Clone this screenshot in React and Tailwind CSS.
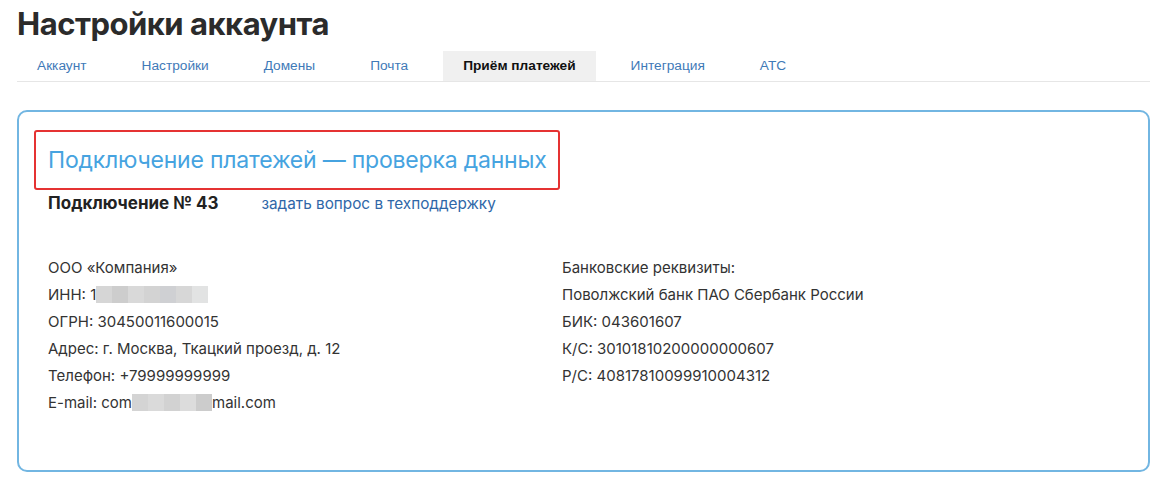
import React from 'react';

const tabs = ['Аккаунт', 'Настройки', 'Домены', 'Почта', 'Приём платежей', 'Интеграция', 'АТС'];
const active = 'Приём платежей';

// blurred fragment: a row of grey squares
const Blur = ({ shades }) => (
  <span className="inline-flex align-middle h-[17px] -mt-[2px]">
    {shades.map((c, i) => (
      <span key={i} className="w-4 h-full" style={{ backgroundColor: c }} />
    ))}
  </span>
);

const App = () => {
  return (
    <div className="min-h-screen bg-white px-[17px] pt-[4px] text-[#333]" style={{ fontFamily: 'Inter, "Noto Sans", sans-serif' }}>
      <h1 className="text-[31px] font-bold leading-[40px] text-[#2b2b2b] tracking-[-0.5px]">Настройки аккаунта</h1>

      {/* Tabs */}
      <div className="mt-[7px] flex gap-[15px] border-b border-[#e6e6e6]" style={{ fontFamily: '"Liberation Sans", Arial, sans-serif' }}>
        {tabs.map(t => (
          <div
            key={t}
            className={`px-5 h-[30px] flex items-center text-[13.7px] ${
              t === active ? 'bg-[#f0f0f0] font-bold text-[#111]' : 'text-[#3f7ab8]'
            }`}
          >
            {t}
          </div>
        ))}
      </div>

      {/* Card */}
      <div className="mt-[28px] border-2 border-[#72b6e2] rounded-[10px] px-[15px] pt-[18px] pb-[54px]">
        <div className="border-2 border-[#e53232] rounded-[3px] w-[526px] h-[60px] flex items-center pl-[12px]">
          <h2 className="text-[23px] text-[#46a3e0] tracking-[-0.2px]">Подключение платежей — проверка данных</h2>
        </div>

        <div className="flex items-baseline pl-[14px] mt-[1px]">
          <span className="text-[17px] font-bold text-[#222]">Подключение № 43</span>
          <span className="ml-[43px] text-[15.3px] text-[#2f67a8]">задать вопрос в техподдержку</span>
        </div>

        <div className="grid grid-cols-[514px_1fr] pl-[14px] mt-[37px] text-[15px] leading-[27px] text-[#333]">
          <div>
            <div>ООО «Компания»</div>
            <div>
              ИНН: 1
              <Blur shades={['#d6d6d6', '#cdcdcd', '#d9d9d9', '#d3d3d3', '#cfd0d3', '#d7d7d7', '#e2e3e3']} />
            </div>
            <div>ОГРН: 30450011600015</div>
            <div>Адрес: г. Москва, Ткацкий проезд, д. 12</div>
            <div>Телефон: +79999999999</div>
            <div>
              E-mail: com
              <Blur shades={['#d4d4d4', '#dadada', '#d2d2d2', '#dcdcdc', '#cccccc']} />
              mail.com
            </div>
          </div>
          <div>
            <div>Банковские реквизиты:</div>
            <div>Поволжский банк ПАО Сбербанк России</div>
            <div>БИК: 043601607</div>
            <div>К/С: 30101810200000000607</div>
            <div>Р/С: 40817810099910004312</div>
          </div>
        </div>
      </div>
    </div>
  );
};

export default App;
